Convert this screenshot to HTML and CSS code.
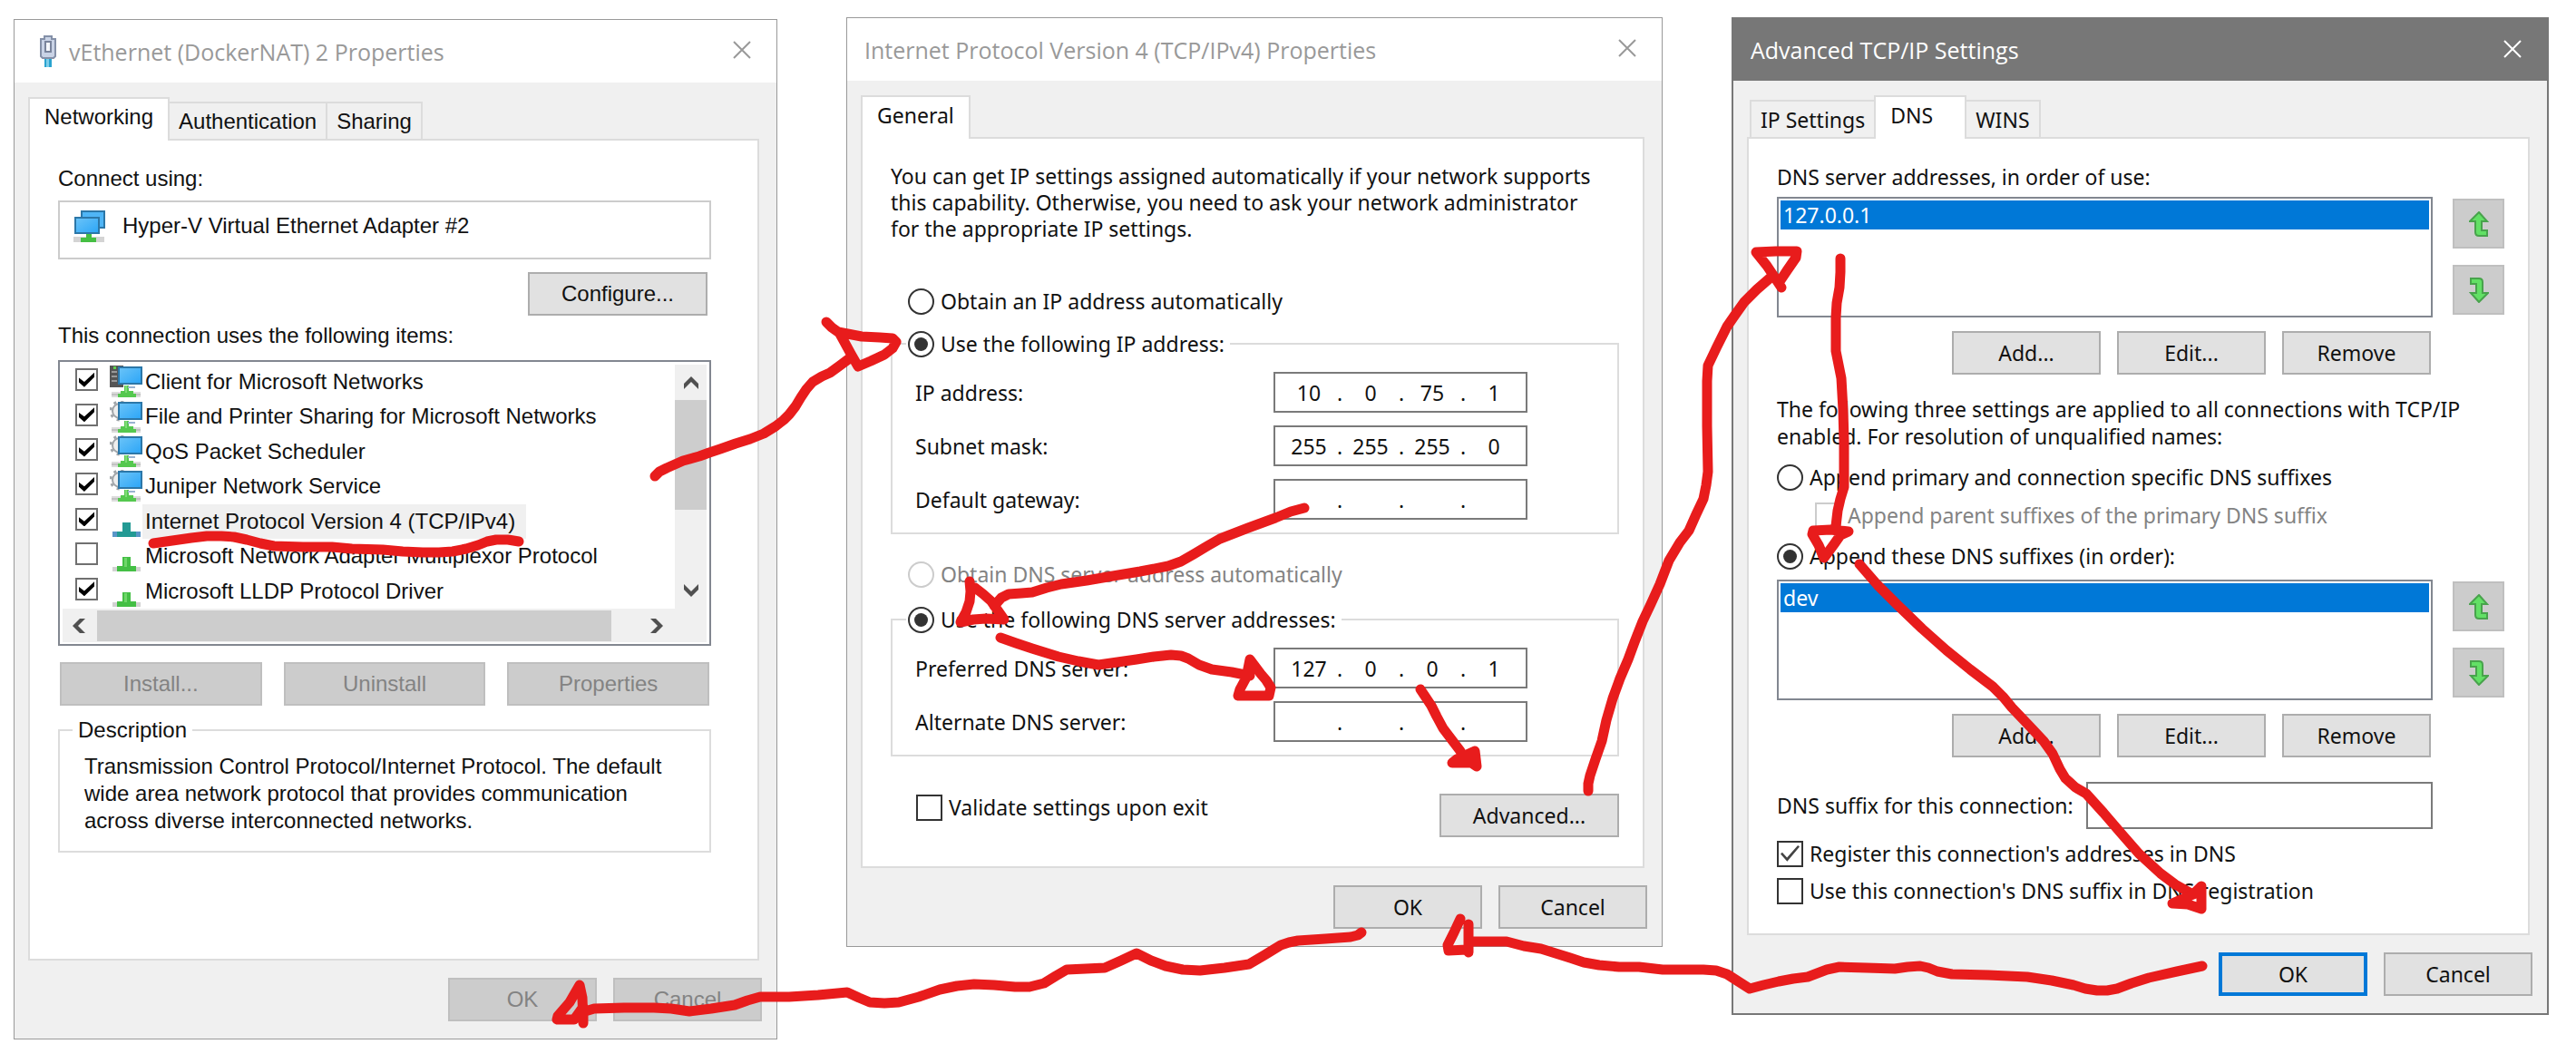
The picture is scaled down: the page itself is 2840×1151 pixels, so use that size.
FILE: index.html
```html
<!DOCTYPE html>
<html lang="en">
<head>
<meta charset="utf-8">
<title>Docker NAT adapter DNS setup</title>
<link rel="stylesheet" href="styles.css">
</head>
<body>
<svg class="defs" aria-hidden="true">
  <linearGradient id="screen" x1="0" y1="0" x2="1" y2="1"><stop offset="0" stop-color="#6cc4f8"/><stop offset="1" stop-color="#2ba5f7"/></linearGradient>
  <symbol id="close" viewBox="0 0 20 20"><path d="M1 1 19 19M19 1 1 19" fill="none" stroke="currentColor" stroke-width="2"/></symbol>
  <symbol id="stand" viewBox="0 0 36 36">
    <path d="M2 29h32v6H2z" fill="#dcdcdc"/><path d="M2 31h32v2H2z" fill="#c2c2c2"/>
    <path d="M16 22h5v6h5v3h3v4H9v-4h3v-3h4z" fill="#55c84f"/><path d="M17 22h2v8h-2z" fill="#7fdd76"/>
    <path d="M20 23h8v2h-8z" fill="#9ab3d0"/>
  </symbol>
  <symbol id="screen-front" viewBox="0 0 36 36"><path d="M10 2h25v18H10z" fill="url(#screen)" stroke="#2c77a8" stroke-width="2"/></symbol>
  <symbol id="client" viewBox="0 0 36 36">
    <path d="M0 0h15v24H0z" fill="#555"/><path d="M2 7h6M2 12h6M2 17h6" stroke="#999" stroke-width="2"/><path d="M4 1h3v3H4z" fill="#5ed04f"/>
    <use href="#stand"/><use href="#screen-front"/>
  </symbol>
  <symbol id="service" viewBox="0 0 36 36">
    <circle cx="11" cy="11" r="8" fill="#eee" stroke="#a0a5a9" stroke-width="2"/>
    <circle cx="11" cy="11" r="10" fill="none" stroke="#a0a5a9" stroke-width="3" stroke-dasharray="3 5"/>
    <use href="#stand"/><use href="#screen-front"/>
  </symbol>
  <symbol id="protocol" viewBox="0 0 36 36">
    <path d="M3 30h31v5H3z" fill="#d2d2d2"/><path d="M14 19h9v10h6v6H8v-6h6z" fill="#44bf45"/><path d="M16 20h3v10h-3z" fill="#6fd76a"/>
  </symbol>
  <symbol id="protocol-selected" viewBox="0 0 36 36">
    <path d="M3 29h31v6H3z" fill="#5a96c8"/><path d="M14 19h9v10h6v6H8v-6h6z" fill="#239a94"/>
  </symbol>
  <symbol id="arrow-up" viewBox="0 0 22 28"><path d="M11 1 20 11H14V21H20V27H11Q7 27 7 23V11H1Z" fill="#62e065" stroke="#48a34c" stroke-width="2"/></symbol>
  <symbol id="arrow-down" viewBox="0 0 22 28"><path d="M11 27 2 17H8V7H2V1H11Q15 1 15 5V17H21Z" fill="#62e065" stroke="#48a34c" stroke-width="2"/></symbol>
  <symbol id="chevron" viewBox="0 0 16 14"><path d="M0 14V8L8 0l8 8v6L8 6z" fill="#505050"/></symbol>
</svg>

<main class="desktop">
  <section class="dialog dialog-adapter" aria-labelledby="t1">
    <header class="titlebar">
      <svg class="plug" viewBox="0 0 18 36" aria-hidden="true"><path d="M5 1h8v3h4v19l-2 2H3l-2-2V4h4z" fill="#c9d3e6" stroke="#8490a8" stroke-width="2"/><path d="M6 7h6v11H6z" fill="#f4f7fb" stroke="#79849c" stroke-width="2"/><path d="M5 26h8v9H5z" fill="#2aa3cf"/><path d="M7 26h3v9H7z" fill="#7ccdea"/></svg>
      <h1 id="t1">vEthernet (DockerNAT) 2 Properties</h1>
      <button class="close" aria-label="Close"><svg><use href="#close"/></svg></button>
    </header>
    <div class="tabs" role="tablist">
      <button class="tab tab-active" role="tab" aria-selected="true">Networking</button>
      <button class="tab" role="tab">Authentication</button>
      <button class="tab" role="tab">Sharing</button>
    </div>
    <div class="panel">
      <p class="label">Connect using:</p>
      <div class="adapter">
        <svg class="item-icon" viewBox="0 0 36 36" aria-hidden="true"><path d="M10 1h25v18H10z" fill="#4fb5f6" stroke="#2c77a8" stroke-width="2"/><path d="M3 8h26v17H3z" fill="url(#screen)" stroke="#2c77a8" stroke-width="2"/><path d="M1 29h34v6H1z" fill="#d4d4d4"/><path d="M15 26h6v4h5v5H9v-5h6z" fill="#45bf43"/></svg>
        <span>Hyper-V Virtual Ethernet Adapter #2</span>
      </div>
      <button class="btn btn-wide configure">Configure...</button>
      <p class="label items-label">This connection uses the following items:</p>
      <div class="items">
        <ul class="rows">
          <li><input class="tick" type="checkbox" id="i1" checked><svg class="item-icon"><use href="#client"/></svg><label for="i1">Client for Microsoft Networks</label></li>
          <li><input class="tick" type="checkbox" id="i2" checked><svg class="item-icon"><use href="#service"/></svg><label for="i2">File and Printer Sharing for Microsoft Networks</label></li>
          <li><input class="tick" type="checkbox" id="i3" checked><svg class="item-icon"><use href="#service"/></svg><label for="i3">QoS Packet Scheduler</label></li>
          <li><input class="tick" type="checkbox" id="i4" checked><svg class="item-icon"><use href="#service"/></svg><label for="i4">Juniper Network Service</label></li>
          <li class="current"><input class="tick" type="checkbox" id="i5" checked><svg class="item-icon"><use href="#protocol-selected"/></svg><label for="i5">Internet Protocol Version 4 (TCP/IPv4)</label></li>
          <li><input class="tick" type="checkbox" id="i6"><svg class="item-icon"><use href="#protocol"/></svg><label for="i6">Microsoft Network Adapter Multiplexor Protocol</label></li>
          <li><input class="tick" type="checkbox" id="i7" checked><svg class="item-icon"><use href="#protocol"/></svg><label for="i7">Microsoft LLDP Protocol Driver</label></li>
        </ul>
        <div class="vbar"><svg class="chev"><use href="#chevron"/></svg><div class="vthumb"></div><svg class="chev chev-down"><use href="#chevron"/></svg></div>
        <div class="hbar"><svg class="chev chev-left"><use href="#chevron"/></svg><div class="hthumb"></div><svg class="chev chev-right"><use href="#chevron"/></svg></div>
        <div class="corner"></div>
      </div>
      <div class="item-actions">
        <button class="btn" disabled>Install...</button>
        <button class="btn" disabled>Uninstall</button>
        <button class="btn" disabled>Properties</button>
      </div>
      <fieldset class="group description">
        <legend>Description</legend>
        <p>Transmission Control Protocol/Internet Protocol. The default<br>wide area network protocol that provides communication<br>across diverse interconnected networks.</p>
      </fieldset>
    </div>
    <footer class="actions"><button class="btn" disabled>OK</button><button class="btn" disabled>Cancel</button></footer>
  </section>

  <section class="dialog dialog-ipv4" aria-labelledby="t2">
    <header class="titlebar">
      <h1 id="t2">Internet Protocol Version 4 (TCP/IPv4) Properties</h1>
      <button class="close" aria-label="Close"><svg><use href="#close"/></svg></button>
    </header>
    <div class="tabs" role="tablist"><button class="tab tab-active" role="tab" aria-selected="true">General</button></div>
    <div class="panel">
      <p class="intro">You can get IP settings assigned automatically if your network supports<br>this capability. Otherwise, you need to ask your network administrator<br>for the appropriate IP settings.</p>
      <label class="choice auto-ip"><input class="radio" type="radio" name="ip">Obtain an IP address automatically</label>
      <fieldset class="group manual">
        <legend><label class="choice"><input class="radio" type="radio" name="ip" checked>Use the following IP address:</label></legend>
        <div class="field"><label for="ip1">IP address:</label><div class="ip"><input id="ip1" value="10"><i>.</i><input aria-label="IP address part 2" value="0"><i>.</i><input aria-label="IP address part 3" value="75"><i>.</i><input aria-label="IP address part 4" value="1"></div></div>
        <div class="field"><label for="sm1">Subnet mask:</label><div class="ip"><input id="sm1" value="255"><i>.</i><input aria-label="Subnet mask part 2" value="255"><i>.</i><input aria-label="Subnet mask part 3" value="255"><i>.</i><input aria-label="Subnet mask part 4" value="0"></div></div>
        <div class="field"><label for="gw1">Default gateway:</label><div class="ip"><input id="gw1"><i>.</i><input aria-label="Gateway part 2"><i>.</i><input aria-label="Gateway part 3"><i>.</i><input aria-label="Gateway part 4"></div></div>
      </fieldset>
      <label class="choice auto-dns choice-off"><input class="radio" type="radio" name="dns" disabled>Obtain DNS server address automatically</label>
      <fieldset class="group manual">
        <legend><label class="choice"><input class="radio" type="radio" name="dns" checked>Use the following DNS server addresses:</label></legend>
        <div class="field"><label for="pd1">Preferred DNS server:</label><div class="ip"><input id="pd1" value="127"><i>.</i><input aria-label="Preferred DNS part 2" value="0"><i>.</i><input aria-label="Preferred DNS part 3" value="0"><i>.</i><input aria-label="Preferred DNS part 4" value="1"></div></div>
        <div class="field"><label for="ad1">Alternate DNS server:</label><div class="ip"><input id="ad1"><i>.</i><input aria-label="Alternate DNS part 2"><i>.</i><input aria-label="Alternate DNS part 3"><i>.</i><input aria-label="Alternate DNS part 4"></div></div>
      </fieldset>
      <div class="validate">
        <label class="choice"><input class="check" type="checkbox">Validate settings upon exit</label>
        <button class="btn btn-wide">Advanced...</button>
      </div>
    </div>
    <footer class="actions"><button class="btn">OK</button><button class="btn">Cancel</button></footer>
  </section>

  <section class="dialog dialog-dns" aria-labelledby="t3">
    <header class="titlebar">
      <h1 id="t3">Advanced TCP/IP Settings</h1>
      <button class="close" aria-label="Close"><svg><use href="#close"/></svg></button>
    </header>
    <div class="tabs" role="tablist">
      <button class="tab" role="tab">IP Settings</button>
      <button class="tab tab-active" role="tab" aria-selected="true">DNS</button>
      <button class="tab" role="tab">WINS</button>
    </div>
    <div class="panel">
      <label class="label" for="servers">DNS server addresses, in order of use:</label>
      <div class="ordered servers">
        <select id="servers" size="4"><option selected>127.0.0.1</option></select>
        <div class="movers"><button class="mover" disabled aria-label="Move up"><svg><use href="#arrow-up"/></svg></button><button class="mover" disabled aria-label="Move down"><svg><use href="#arrow-down"/></svg></button></div>
        <div class="edits"><button class="btn">Add...</button><button class="btn">Edit...</button><button class="btn">Remove</button></div>
      </div>
      <p class="names">The following three settings are applied to all connections with TCP/IP<br>enabled. For resolution of unqualified names:</p>
      <label class="choice"><input class="radio" type="radio" name="suffix">Append primary and connection specific DNS suffixes</label>
      <label class="choice parent choice-off"><input class="check" type="checkbox" disabled>Append parent suffixes of the primary DNS suffix</label>
      <label class="choice" id="suffix-label"><input class="radio" type="radio" name="suffix" checked>Append these DNS suffixes (in order):</label>
      <div class="ordered suffixes">
        <select aria-labelledby="suffix-label" size="4"><option selected>dev</option></select>
        <div class="movers"><button class="mover" disabled aria-label="Move up"><svg><use href="#arrow-up"/></svg></button><button class="mover" disabled aria-label="Move down"><svg><use href="#arrow-down"/></svg></button></div>
        <div class="edits"><button class="btn">Add...</button><button class="btn">Edit...</button><button class="btn">Remove</button></div>
      </div>
      <div class="suffix"><label for="sfx">DNS suffix for this connection:</label><input id="sfx" type="text"></div>
      <label class="choice register"><input class="check" type="checkbox" checked>Register this connection's addresses in DNS</label>
      <label class="choice register"><input class="check" type="checkbox">Use this connection's DNS suffix in DNS registration</label>
    </div>
    <footer class="actions"><button class="btn btn-default">OK</button><button class="btn">Cancel</button></footer>
  </section>

  <svg class="ink" viewBox="0 0 2840 1151" aria-hidden="true">
    <path d="M169 599 190 596 211 593 228 591 244 591 258 592 272 595 287 599 302 602 334 603 366 603 388 605 422 606 444 608 466 609 484 609 499 608 514 605 527 601 537 597 547 595 560 595 572 597"/>
    <path d="M722 525 727 520 735 516 753 508 771 503 782 499 794 495 811 489 827 484 842 478 855 470 864 463 870 457 877 448 883 438 889 429 896 421 906 415 915 411 926 403 938 394M911 355 917 361 924 366 950 371 970 372 984 373 988 377 984 384 975 391 960 398 946 404 938 390 926 368"/>
    <path d="M1438 560 1423 564 1406 571 1376 582 1345 594 1331 602 1316 611 1302 619 1288 624 1257 630 1227 635 1198 640 1170 644 1154 648 1138 653 1126 654 1112 655 1104 659 1096 668M1069 641 1070 652 1069 663 1065 675 1059 686 1073 683 1087 682 1107 683 1100 673 1093 663 1084 655 1075 648"/>
    <path d="M1103 703 1120 709 1138 715 1167 724 1189 729 1211 733 1232 730 1253 727 1272 724 1291 722 1302 723 1310 726 1322 733 1336 738 1358 741 1378 745M1378 727 1376 737 1374 747 1367 760 1365 767 1399 767 1401 758 1396 750 1390 743Z"/>
    <path class="solid" d="M1566 760 1578 778 1584 790 1591 803 1610 828M1626 828 1606 837 1601 841 1622 841 1628 845Z"/>
    <path d="M1751 872 1751 864 1753 855 1759 837 1766 817 1771 794 1778 770 1786 748 1795 727 1802 708 1811 685 1820 666 1830 644 1840 618 1852 598 1862 585 1870 567 1878 550 1881 535 1883 520 1882 470 1882 420 1883 403 1893 382 1904 360 1913 347 1923 333 1937 319 1952 306M1964 317 1956 305 1948 293 1936 278 1958 277 1981 277 1980 284 1971 297 1961 312"/>
    <path d="M2029 285 2029 300 2028 317 2025 334 2024 350 2024 387 2027 402 2030 417 2032 452 2033 487 2033 537 2029 550 2026 563 2024 580M1999 585 2018 584 2038 586 2029 590 2022 600 2011 615 2005 601 1998 589Z"/>
    <path d="M2050 622 2070 645 2092 667 2119 693 2146 717 2172 738 2197 757 2209 769 2218 780 2238 801 2253 817 2263 831 2271 848 2277 858 2288 868 2300 875 2319 896 2337 917 2358 941 2382 963 2398 975 2414 984"/>
    <path class="solid" d="M2427 977 2418 986 2395 996 2412 997 2427 1002Z"/>
    <path d="M2428 1065 2400 1071 2369 1078 2350 1084 2334 1090 2323 1092 2312 1092 2299 1090 2286 1086 2262 1081 2235 1077 2192 1075 2152 1074 2136 1071 2126 1067 2117 1065 2103 1066 2089 1068 2058 1067 2028 1066 2014 1069 1993 1077 1977 1079 1961 1082 1944 1086 1929 1090 1918 1083 1904 1074 1892 1070 1878 1069 1833 1069 1807 1066 1785 1066 1763 1064 1746 1061 1731 1056 1715 1051 1699 1046 1680 1043 1661 1038 1622 1038M1610 1013 1603 1028 1596 1042 1597 1048 1617 1047 1619 1050 1619 1019"/>
    <path d="M1501 1028 1497 1031 1489 1033 1461 1035 1431 1037 1421 1039 1412 1042 1394 1053 1377 1063 1350 1067 1323 1070 1304 1069 1285 1065 1269 1059 1253 1051 1236 1059 1218 1067 1197 1068 1176 1069 1164 1076 1151 1084 1135 1088 1119 1088 1096 1086 1074 1085 1055 1087 1036 1091 1013 1099 991 1105 975 1106 959 1105 947 1100 934 1094 902 1097 870 1099 838 1099 824 1103 810 1108 784 1112 760 1115 740 1112 721 1111 688 1111 655 1112 645 1115M639 1086 628 1105 615 1120 614 1124 633 1124 643 1110 643 1128 642 1100Z"/>
  </svg>
</main>
</body>
</html>
```
FILE: styles.css
```css
* { box-sizing: border-box; }
body { margin: 0; background: #fff; color: #111; }
h1, p, ul { margin: 0; padding: 0; }
.defs { position: absolute; width: 0; height: 0; }

.desktop {
  position: relative;
  display: grid;
  grid-template-columns: 842fr 900fr 901fr;
  align-items: start;
  column-gap: 76px;
  padding: 19px 30px 7px 15px;
}
.ink { position: absolute; top: 0; left: 0; width: 100%; pointer-events: none; }
.ink path { fill: none; stroke: #e81c1c; stroke-width: 11; stroke-linecap: round; stroke-linejoin: round; }

/* Dialog frame */
.dialog { border: 1px solid #999; background: #f0f0f0; font: 23px/30px "Noto Sans", "DejaVu Sans Condensed", sans-serif; }
.dialog-adapter { margin-top: 2px; font: 24px/30px "Liberation Sans", Arial, sans-serif; }
.dialog-dns { border: 2px solid #777; }
.titlebar { display: flex; align-items: center; height: 69px; padding: 0 28px 0 19px; background: #fff; color: #999; }
.titlebar h1 { flex: 1; font: 25px/34px "Open Sans", "Noto Sans", sans-serif; }
.dialog-adapter .titlebar { padding-left: 28px; }
.dialog-dns .titlebar { height: 68px; background: #777; color: #fff; }
.plug { width: 18px; height: 36px; margin-right: 14px; }
.close { display: flex; padding: 0 0 3px; border: 0; background: none; color: inherit; }
.close svg { width: 20px; height: 20px; }

button, input, select { font: inherit; color: inherit; }
.tabs { display: flex; align-items: flex-end; padding: 16px 15px 0; }
.dialog-dns .tabs { padding-left: 18px; }
.tab { margin: 0 -2px 0 0; padding: 5px 10px 4px; border: 2px solid #dcdcdc; border-bottom: 0; background: #f0f0f0; text-align: left; }
.tab-active { position: relative; min-width: 102px; margin-bottom: -2px; padding: 5px 16px 11px; background: #fff; }
.panel { margin: 0 19px 19px 15px; padding: 27px 26px 32px 31px; border: 2px solid #dcdcdc; background: #fff; }
.dialog-adapter .panel { padding: 27px 51px 117px 31px; }
.actions { display: flex; justify-content: flex-end; gap: 18px; padding: 0 16px 19px; }

.btn { width: 164px; height: 48px; padding: 0; border: 2px solid #adadad; background: #e1e1e1; }
.btn:disabled { border-color: #bfbfbf; background: #ccc; color: #838383; }
.btn-wide { width: 198px; }
.btn-default { border: 4px solid #0078d7; }
.label { display: block; }

/* Form controls */
.group { margin: 0; padding: 0; border: 2px solid #dcdcdc; min-width: 0; }
.choice { display: flex; align-items: center; gap: 7px; }
.choice-off { color: #838383; }
.radio, .check, .tick { appearance: none; flex: none; display: grid; place-items: center; width: 29px; height: 29px; margin: 0; border: 2px solid #333; background: #fff; }
.radio { border-radius: 50%; }
.radio:checked::before { content: ""; width: 15px; height: 15px; border-radius: 50%; background: #333; }
.radio:disabled, .check:disabled { border-color: #ccc; }
.check:checked::before { content: ""; width: 21px; height: 19px; background: #444; clip-path: polygon(0 52%, 9% 43%, 34% 74%, 91% 3%, 100% 10%, 35% 96%); }
.tick { width: 25px; height: 25px; border-color: #707070; }
.tick:checked::before { content: ""; width: 17px; height: 16px; background: #000; clip-path: polygon(0 36%, 35% 64%, 100% 0, 100% 32%, 35% 100%, 0 68%); }

/* Adapter properties */
.adapter { display: flex; align-items: flex-start; gap: 19px; height: 65px; margin-top: 9px; padding: 9px 14px; border: 2px solid #ccc; line-height: 34px; }
.item-icon { flex: none; width: 36px; height: 36px; }
.configure { display: block; margin: 14px 4px 0 auto; }
.items-label { margin-top: 7px; }
.items { display: grid; grid-template-columns: 1fr 35px; grid-template-rows: 269px 37px; margin-top: 12px; padding: 3px 3px 2px; border: 2px solid #828790; }
.rows { display: grid; grid-auto-rows: 1fr; list-style: none; }
.rows li { display: flex; align-items: center; padding-left: 14px; }
.rows .item-icon { margin-left: 13px; }
.rows .tick { margin-bottom: 5px; }
.rows label { align-self: stretch; padding: 4px 10px 0 3px; white-space: nowrap; }
.rows .current label { padding-right: 12px; background: #f0f0f0; }
.vbar { display: flex; flex-direction: column; align-items: center; padding: 13px 0 13px; background: #f0f0f0; }
.vthumb { width: 100%; height: 121px; margin: 12px 0 auto; background: #cdcdcd; }
.hbar { display: flex; align-items: center; padding: 0 12px 0 10px; background: #f0f0f0; }
.hthumb { flex: 1; height: 34px; margin: 0 42px 0 12px; background: #cdcdcd; }
.corner { background: #f0f0f0; }
.chev { flex: none; width: 16px; height: 14px; }
.chev-down { transform: rotate(180deg); }
.chev-left { transform: rotate(-90deg); }
.chev-right { transform: rotate(90deg); }
.item-actions { display: grid; grid-template-columns: repeat(3, 1fr); gap: 24px; margin: 18px 2px 0; }
.item-actions .btn { width: auto; }
.description { margin-top: 12px; padding: 10px 0 18px 27px; }
.description legend { margin-left: -13px; padding: 0 6px; }

/* IPv4 properties */
.intro { line-height: 29px; white-space: nowrap; }
.auto-ip { margin: 50px 0 17px 19px; }
.auto-dns { margin: 29px 0 20px 19px; }
.manual { padding: 0 99px 14px 25px; }
.manual legend { margin-left: -10px; padding: 0 6px 0 2px; }
.field { display: flex; align-items: center; justify-content: space-between; margin-top: 14px; }
.manual legend + .field { margin-top: 16px; }
.ip { display: flex; align-items: center; width: 280px; height: 45px; padding-left: 9px; border: 2px solid #7a7a7a; }
.ip input { width: 56px; padding: 0; border: 0; background: none; text-align: center; }
.ip i { width: 12px; font-style: normal; text-align: center; }
.validate { display: flex; align-items: flex-start; justify-content: space-between; margin-top: 41px; padding-left: 28px; }

/* DNS settings */
.ordered { display: grid; grid-template-columns: 1fr 57px; column-gap: 22px; row-gap: 15px; margin-top: 7px; }
.suffixes { margin-top: 11px; }
.ordered select { appearance: none; width: 100%; height: 133px; padding: 2px; border: 2px solid #828790; border-radius: 0; outline: 0; background: #fff; overflow: hidden; }
.ordered option { min-height: 30px; padding: 0 3px; line-height: 30px; }
.ordered option:checked { background: #0078d7 linear-gradient(#0078d7, #0078d7); color: #fff; }
.movers { display: flex; flex-direction: column; gap: 18px; padding-top: 2px; }
.mover { display: grid; place-items: center; height: 55px; padding: 0; border: 2px solid #bfbfbf; background: #ccc; }
.mover svg { width: 22px; height: 28px; }
.edits { display: flex; justify-content: flex-end; gap: 18px; padding-right: 2px; }
.names { margin: 23px 0 15px; white-space: nowrap; }
.parent { margin: 12px 0 15px 42px; }
.suffix { display: flex; align-items: center; gap: 14px; margin: 27px 79px 12px 0; }
.suffix label { white-space: nowrap; }
.suffix input { flex: 1; min-width: 0; height: 52px; padding: 0 6px; border: 2px solid #7a7a7a; }
.register + .register { margin-top: 11px; }
```
